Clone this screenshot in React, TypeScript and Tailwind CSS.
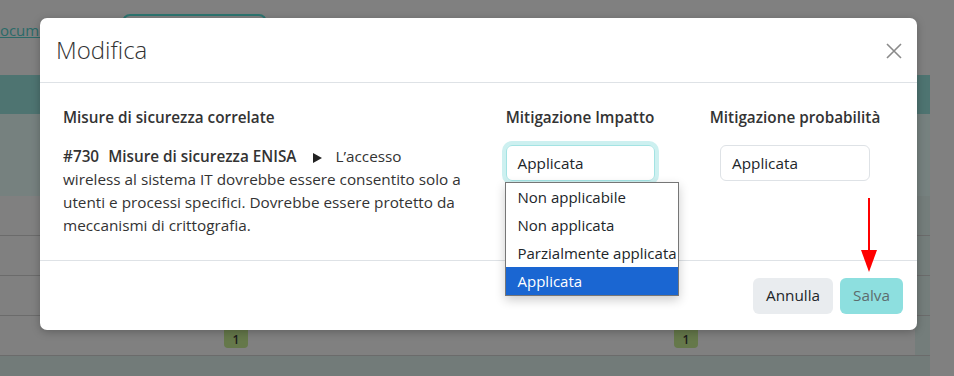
import React from "react";

const options = ["Non applicabile", "Non applicata", "Parzialmente applicata", "Applicata"];

function Badge() {
  return (
    <div className="flex h-[22px] w-[24px] items-end justify-center rounded-[4px] bg-[#65784a] pb-[2px] text-[12px] font-semibold leading-none text-[#1c1c1c]">
      1
    </div>
  );
}

function BgRow({ children }: { children?: React.ReactNode }) {
  return (
    <div className="flex h-[40px] border-b border-[#6b6b6b]">
      <div className="flex flex-1 items-center">{children}</div>
      <div className="w-[15px] bg-[#747d7b]" />
    </div>
  );
}

export default function App() {
  return (
    <div
      className="relative h-[376px] w-[954px] overflow-hidden bg-[#808080] text-[#212529]"
      style={{ fontFamily: '"Open Sans", "Noto Sans", sans-serif' }}
    >
      {/* page behind the backdrop */}
      <div className="flex h-[75px] items-start">
        <div className="w-[122px] overflow-hidden pt-[19px]">
          <span className="-ml-[11px] block text-[15px] text-[#2b6a68] underline">Documenti</span>
        </div>
        <div className="mt-[14px] h-[40px] w-[145px] rounded-[8px] border-2 border-[#2d7570]" />
      </div>
      <div className="w-[930px]">
        <div className="h-[39px] bg-[#4e7471]" />
        <div className="h-[82px] bg-[#76817f]" />
        <BgRow />
        <BgRow />
        <BgRow />
        <BgRow>
          <div className="ml-[224px] mt-[2px]">
            <Badge />
          </div>
          <div className="ml-[426px] mt-[2px]">
            <Badge />
          </div>
        </BgRow>
        <div className="h-[30px] bg-[#727b79]" />
      </div>

      {/* modal */}
      <div className="absolute left-[40px] top-[18px] flex h-[312px] w-[877px] flex-col rounded-[7px] bg-white shadow-[0_2px_8px_rgba(0,0,0,0.25)]">
        <div className="flex h-[65px] shrink-0 items-center justify-between border-b border-[#dee2e6] pl-[16px] pr-[15px]">
          <h2 className="text-[24px] font-light text-[#333]">Modifica</h2>
          <svg width="16" height="16" viewBox="0 0 16 16" className="mt-[1px]">
            <path d="M1 1 L15 15 M15 1 L1 15" stroke="#8a8a8a" strokeWidth="1.6" />
          </svg>
        </div>

        <div className="flex h-[177px] shrink-0 px-[23px] pt-[22px] text-[15.3px]">
          <div className="w-[427px]">
            <div className="font-semibold leading-[24px] text-[#333]">Misure di sicurezza correlate</div>
            <p className="mt-[16px] w-[406px] leading-[23px] text-[#333]">
              <span className="font-semibold">#730</span>
              <span className="ml-[9px] font-semibold">Misure di sicurezza ENISA</span>
              <svg width="9" height="10" viewBox="0 0 9 10" className="mx-[13px] ml-[17px] inline-block align-[-1px]">
                <path d="M0 0 L9 5 L0 10 Z" fill="#222" />
              </svg>
              L’accesso
              <br />
              wireless al sistema IT dovrebbe essere consentito solo a utenti e processi specifici.
              Dovrebbe essere protetto da meccanismi di crittografia.
            </p>
          </div>

          <div className="flex w-[180px] flex-col items-center">
            <div className="font-semibold leading-[24px] text-[#333]">Mitigazione Impatto</div>
            <div className="relative mt-[16px]">
              <div className="flex h-[36px] w-[149px] items-center rounded-[6px] border border-[#a3e3e3] pl-[11px] shadow-[0_0_0_4px_#cdf0f0]">
                Applicata
              </div>
              <div className="absolute -left-[1px] top-[37px] z-10 w-[174px] border border-[#767676] bg-white text-[15px] shadow-[0_4px_10px_rgba(0,0,0,0.2)]">
                {options.map((o) => (
                  <div
                    key={o}
                    className={
                      o === "Applicata"
                        ? "flex h-[28px] items-center whitespace-nowrap bg-[#1a66d2] pl-[12px] text-white"
                        : "flex h-[28px] items-center whitespace-nowrap pl-[12px] text-[#212529]"
                    }
                  >
                    {o}
                  </div>
                ))}
              </div>
            </div>
          </div>

          <div className="ml-[35px] flex w-[180px] flex-col items-center">
            <div className="font-semibold leading-[24px] text-[#333]">Mitigazione probabilità</div>
            <div className="mt-[16px] flex h-[36px] w-[150px] items-center rounded-[6px] border border-[#dee2e6] pl-[11px]">
              Applicata
            </div>
          </div>
        </div>

        <div className="flex flex-1 items-center justify-end gap-[7px] border-t border-[#dee2e6] pr-[14px] text-[15.3px]">
          <button type="button" className="h-[36px] w-[80px] rounded-[6px] bg-[#e9ecef] text-[#212529]">
            Annulla
          </button>
          <button type="button" className="h-[36px] w-[63px] rounded-[6px] bg-[#8ddfdf] text-[#5d6c6d]">
            Salva
          </button>
        </div>
      </div>

      {/* red pointer arrow */}
      <svg width="20" height="78" viewBox="0 0 20 78" className="absolute left-[859px] top-[196px]">
        <path d="M10 2 L10 60" stroke="#ff0000" strokeWidth="2" />
        <path d="M2 54 L18 54 L10 76 Z" fill="#ff0000" />
      </svg>
    </div>
  );
}
